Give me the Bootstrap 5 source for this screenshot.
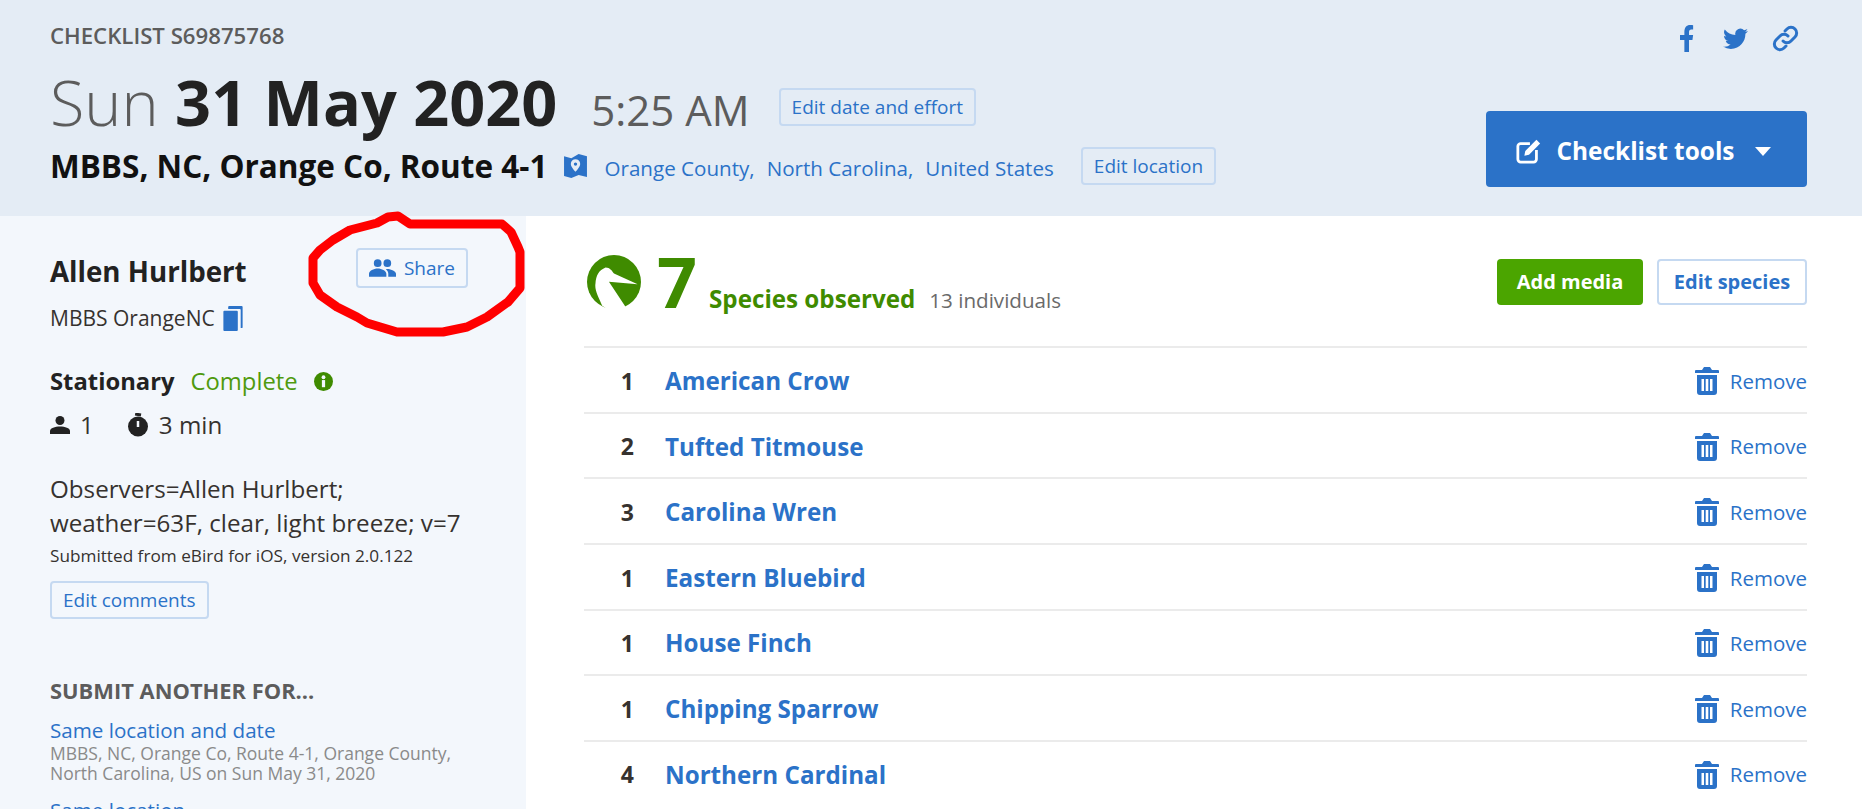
<!DOCTYPE html>
<html lang="en">
<head>
  <meta charset="UTF-8" />
  <title>Checklist S69875768</title>
  <link href="https://cdn.jsdelivr.net/npm/bootstrap@5.3.2/dist/css/bootstrap.min.css" rel="stylesheet" />
  <style>
    html, body {
      height: 100%;
      overflow: hidden;
    }
    body {
      background-color: #fff;
      color: #36322f;
      font-family: "Open Sans", "Noto Sans", sans-serif;
      position: relative;
    }
    a {
      color: #2b72c8;
      text-decoration: none;
    }
    .top-band {
      background-color: #e4ecf5;
      height: 216px;
      padding: 0 55px 0 50px;
    }
    .check-id {
      color: #5c5c5c;
      font-size: 22.2px;
      font-weight: 600;
      padding-top: 22px;
      line-height: 28px;
    }
    .date-line {
      margin-top: 14px;
      line-height: 76px;
    }
    .date-day {
      color: #5c5c5c;
      font-size: 63px;
      font-weight: 300;
    }
    .date-full {
      color: #222;
      font-size: 63px;
      font-weight: 700;
    }
    .date-time {
      color: #5c5c5c;
      font-size: 42px;
      font-weight: 400;
      margin-left: 34px;
    }
    .date-edit {
      align-self: center;
      margin-left: 29px;
      margin-top: 2px;
    }
    .loc-line {
      margin-top: -6px;
    }
    .loc-name {
      color: #111;
      font-size: 31.5px;
      font-weight: 700;
    }
    .loc-link {
      font-size: 20.6px;
      margin-right: 12px;
      padding-top: 6px;
    }
    .loc-edit {
      margin-left: 15px;
    }
    .btn-edit {
      background: transparent;
      border: 2px solid #c5d9f1;
      border-radius: 4px;
      color: #2b72c8;
      font-size: 19px;
      line-height: 24px;
      padding: 5px 11px;
    }
    .btn-share {
      margin-top: 2px;
      padding: 6px 11px;
    }
    .social-row {
      margin-top: 25px;
      padding-right: 8px;
    }
    .social-fb {
      margin-right: 29px;
    }
    .social-tw {
      margin-right: 24px;
    }
    .btn-tools {
      background-color: #2b72c8;
      border: 0;
      border-radius: 4px;
      color: #fff;
      font-size: 24.4px;
      font-weight: 700;
      height: 76px;
      width: 321px;
      margin-bottom: 29px;
      padding: 4px 6px 0 0;
    }
    .tools-label {
      margin-left: 15px;
      margin-right: 21px;
    }
    .tools-caret {
      border-left: 8px solid transparent;
      border-right: 8px solid transparent;
      border-top: 9px solid #fff;
    }
    .body-row {
      height: 593px;
      overflow: hidden;
    }
    .side-col {
      background-color: #f3f7fc;
      width: 526px;
      flex: none;
      padding: 30px 58px 0 50px;
    }
    .observer {
      color: #222;
      font-size: 27.7px;
      font-weight: 700;
      line-height: 38px;
      margin-top: 6px;
    }
    .side-user {
      font-size: 21px;
      line-height: 28px;
      margin-top: 14px;
    }
    .side-text {
      font-size: 24.2px;
      line-height: 34px;
    }
    .side-protocol {
      color: #222;
      font-size: 23.8px;
      margin-top: 32px;
    }
    .side-effort {
      margin-top: 10px;
    }
    .effort-val {
      margin-left: 10px;
    }
    .effort-time {
      margin-left: 33px;
    }
    .side-comments {
      margin-top: 30px;
    }
    .side-tiny {
      font-size: 17.2px;
      line-height: 24px;
      margin-top: 4px;
    }
    .comments-edit {
      margin-top: 13px;
    }
    .side-head {
      color: #5c5c5c;
      font-size: 21.9px;
      font-weight: 700;
      line-height: 30px;
      margin-top: 57px;
    }
    .submit-link {
      font-size: 20.6px;
      line-height: 24px;
      margin-top: 12px;
    }
    .submit-note {
      color: #8a8a8a;
      font-size: 17.5px;
      line-height: 20px;
      margin-top: 1px;
      margin-bottom: 15px;
    }
    .complete-text {
      color: #4f9a0e;
    }
    .main-col {
      padding: 39px 55px 0 58px;
      min-width: 0;
    }
    .bird-logo {
      margin-left: 3px;
    }
    .total-num {
      color: #3f8b00;
      font-size: 70px;
      font-weight: 700;
      line-height: 52px;
      margin-left: 16px;
    }
    .total-label {
      color: #3f8b00;
      font-size: 24.2px;
      font-weight: 700;
      margin-left: 12px;
    }
    .total-count {
      color: #6a6a6a;
      font-size: 20.6px;
      margin-left: 14px;
    }
    .head-btns {
      gap: 14px;
      margin-top: 4px;
    }
    .btn-media {
      background-color: #4ba500;
      border: 0;
      border-radius: 4px;
      color: #fff;
      font-size: 20px;
      font-weight: 700;
      height: 46px;
      width: 146px;
    }
    .btn-species {
      background-color: #fff;
      border: 2px solid #c5d9f1;
      border-radius: 4px;
      color: #2b72c8;
      font-size: 20px;
      font-weight: 700;
      height: 46px;
      width: 150px;
    }
    .sp-list {
      margin-top: 29px;
    }
    .sp-row {
      border-top: 2px solid #ebebeb;
      height: 65.6px;
      padding-top: 2px;
    }
    .sp-count {
      color: #36322f;
      font-size: 23px;
      font-weight: 700;
      width: 50px;
      text-align: right;
    }
    .sp-name {
      color: #2b72c8;
      font-size: 24.2px;
      font-weight: 700;
      margin-left: 31px;
    }
    .sp-remove {
      color: #2b72c8;
      font-size: 20.5px;
      margin-left: 11px;
    }
    .ink-circle {
      position: absolute;
      left: 0;
      top: 0;
      pointer-events: none;
    }
  </style>
</head>
<body>
  <svg width="0" height="0" class="d-block">
    <symbol id="ic-trash" viewBox="0 0 24 28"><path fill="#2b72c8" d="M9 0h6l2 3h6a1 1 0 0 1 1 1v2H0V4a1 1 0 0 1 1-1h6zM2 8h20v17a3 3 0 0 1-3 3H5a3 3 0 0 1-3-3zm4.500 4v12h2.500V12zm4.200 0v12h2.600V12zm4.300 0v12h2.500V12z"/></symbol>
  </svg>

  <!-- Header -->
  <div class="top-band d-flex justify-content-between">
    <div>
      <div class="check-id">CHECKLIST S69875768</div>
      <div class="date-line d-flex align-items-baseline">
        <span class="date-day">Sun&nbsp;</span><span class="date-full">31 May 2020</span>
        <span class="date-time">5:25 AM</span>
        <button class="btn-edit date-edit">Edit date and effort</button>
      </div>
      <div class="loc-line d-flex align-items-center">
        <span class="loc-name">MBBS, NC, Orange Co, Route 4-1</span>
        <svg class="ms-3 me-3" width="25" height="25" viewBox="0 0 22 24"><path fill="#2b72c8" fill-rule="evenodd" d="M0 3l7 2 7-4 8 2v20l-8-2-7 3-7-2zM11 6a4.500 4.500 0 0 0-4.500 4.500c0 3 4.500 7.500 4.500 7.500s4.500-4.500 4.500-7.500A4.500 4.500 0 0 0 11 6zm0 3a1.600 1.600 0 1 1 0 3.200 1.600 1.600 0 0 1 0-3.200z"/></svg>
        <a class="loc-link" href="#">Orange County,</a>
        <a class="loc-link" href="#">North Carolina,</a>
        <a class="loc-link" href="#">United States</a>
        <button class="btn-edit loc-edit">Edit location</button>
      </div>
    </div>
    <div class="d-flex flex-column align-items-end">
      <div class="social-row d-flex align-items-center">
        <svg class="social-fb" width="14" height="27" viewBox="0 0 16 27" preserveAspectRatio="none"><path fill="#2b72c8" d="M5 27V15H0v-5h5V7c0-4.500 2.500-7 6.500-7 1.800 0 3.500.2 3.500.2v4.300h-2c-2 0-2.700 1.200-2.700 2.600V10h4.700l-.8 5h-3.900v12z"/></svg>
        <svg class="social-tw" width="25" height="22" viewBox="0 0 24 20"><path fill="#2b72c8" d="M24 2.400c-.9.400-1.800.7-2.800.8 1-.6 1.800-1.600 2.200-2.700-1 .6-2 1-3.100 1.200A4.900 4.900 0 0 0 11.900 6.200 14 14 0 0 1 1.700.9a4.900 4.900 0 0 0 1.500 6.600c-.8 0-1.600-.2-2.200-.6v.1c0 2.400 1.700 4.400 3.900 4.800-.7.200-1.500.2-2.200.1.600 2 2.400 3.400 4.600 3.400A9.900 9.900 0 0 1 0 17.300 14 14 0 0 0 7.500 19.500c9.100 0 14-7.500 14-14v-.6c1-.7 1.800-1.600 2.500-2.500z"/></svg>
        <svg width="27" height="27" viewBox="0 0 27 27" fill="none" stroke="#2b72c8" stroke-width="3" stroke-linecap="round"><path d="M11 16a5.500 5.500 0 0 0 8 0l4-4a5.600 5.600 0 0 0-8-8l-2 2"/><path d="M16 11a5.500 5.500 0 0 0-8 0l-4 4a5.600 5.600 0 0 0 8 8l2-2"/></svg>
      </div>
      <button class="btn-tools d-flex align-items-center justify-content-center mt-auto">
        <svg width="26" height="26" viewBox="0 0 28 28" fill="none" stroke="#fff" stroke-width="3"><path d="M15 6H5a3 3 0 0 0-3 3v14a3 3 0 0 0 3 3h14a3 3 0 0 0 3-3V13"/><path fill="#fff" stroke="none" d="M22 2l4 4-12 12-5 1 1-5z"/></svg>
        <span class="tools-label">Checklist tools</span>
        <span class="tools-caret"></span>
      </button>
    </div>
  </div>

  <div class="body-row d-flex">
    <!-- Sidebar -->
    <div class="side-col">
      <div class="d-flex justify-content-between align-items-start">
        <div>
          <div class="observer">Allen Hurlbert</div>
          <div class="side-user d-flex align-items-center">
            <span>MBBS OrangeNC</span>
            <svg class="ms-2" width="20" height="25" viewBox="0 0 20 26"><path fill="#2b72c8" d="M5 1a1 1 0 0 1 1-1h13a1 1 0 0 1 1 1v21a1 1 0 0 1-1 1h-1V4a1 1 0 0 0-1-1H5zM0 6a1 1 0 0 1 1-1h13a1 1 0 0 1 1 1v19a1 1 0 0 1-1 1H1a1 1 0 0 1-1-1z"/></svg>
          </div>
        </div>
        <button class="btn-edit btn-share d-flex align-items-center">
          <svg class="me-2" width="27" height="18" viewBox="0 0 28 18"><path fill="#2b72c8" d="M9 8a4 4 0 1 0 0-8 4 4 0 0 0 0 8zm10 0a4 4 0 1 0 0-8 4 4 0 0 0 0 8zM0 18v-3c0-3 5-5.500 9-5.500s9 2.500 9 5.500v3zm20 0v-3c0-2-1-3.500-2.500-4.800.6-.2 1.100-.2 1.500-.2 4 0 9 2.500 9 5v3z"/></svg>
          Share
        </button>
      </div>

      <div class="side-text side-protocol d-flex align-items-center">
        <strong>Stationary</strong>
        <span class="complete-text ms-3">Complete</span>
        <svg class="ms-3" width="19" height="19" viewBox="0 0 20 20"><circle cx="10" cy="10" r="10" fill="#3f8b00"/><rect x="8.300" y="8.500" width="3.400" height="7.500" fill="#f3f7fc"/><circle cx="10" cy="5.500" r="2" fill="#f3f7fc"/></svg>
      </div>
      <div class="side-text side-effort d-flex align-items-center">
        <svg width="20" height="18" viewBox="0 0 20 18"><circle cx="10" cy="4.500" r="4.500" fill="#222"/><path fill="#222" d="M0 18v-3c0-3 5-4.500 10-4.500S20 12 20 15v3z"/></svg>
        <span class="effort-val">1</span>
        <svg class="effort-time" width="22" height="24" viewBox="0 0 22 24"><rect x="8" y="0" width="6" height="3" fill="#222" transform="rotate(10 11 2)"/><circle cx="11" cy="13.500" r="10" fill="#222"/><path d="M11 8v6" stroke="#f3f7fc" stroke-width="2.500"/></svg>
        <span class="effort-val">3 min</span>
      </div>

      <div class="side-text side-comments">Observers=Allen Hurlbert;<br>weather=63F, clear, light breeze; v=7</div>
      <div class="side-tiny">Submitted from eBird for iOS, version 2.0.122</div>
      <button class="btn-edit comments-edit">Edit comments</button>

      <div class="side-head">SUBMIT ANOTHER FOR...</div>
      <a class="submit-link d-block" href="#">Same location and date</a>
      <div class="submit-note">MBBS, NC, Orange Co, Route 4-1, Orange County,<br>North Carolina, US on Sun May 31, 2020</div>
      <a class="submit-link d-block" href="#">Same location</a>
    </div>

    <!-- Species list -->
    <div class="main-col flex-grow-1">
      <div class="d-flex justify-content-between align-items-start">
        <div class="d-flex align-items-start">
          <svg class="bird-logo" width="54" height="54" viewBox="0 0 160 160"><circle cx="80" cy="80" r="80" fill="#3f8b00"/><path fill="#fff" d="M45 150C35 125 22 105 25 85 27 60 35 45 55 37 68 37 75 48 80 55L150 87 65 79 115 155 80 175z"/></svg>
          <div class="d-flex align-items-baseline">
            <span class="total-num">7</span>
            <span class="total-label">Species observed</span>
            <span class="total-count">13 individuals</span>
          </div>
        </div>
        <div class="head-btns d-flex">
          <button class="btn-media">Add media</button>
          <button class="btn-species">Edit species</button>
        </div>
      </div>
      <div id="speciesList" class="sp-list"></div>
    </div>
  </div>

  <!-- hand-drawn circle from the screenshot -->
  <svg class="ink-circle" width="1862" height="809" fill="none" stroke="#f00" stroke-width="9" stroke-linejoin="round">
    <path d="M398 216L410 224H502L511 232 518 247 520 252V288L508 302 487 317 467 327 443 332H397L367 323 357 317 337 307 320 295 313 283V258L320 250 333 240 350 230 377 223 388 217z"/>
  </svg>

  <script>
    const species = [
      [1, "American Crow"], [2, "Tufted Titmouse"], [3, "Carolina Wren"], [1, "Eastern Bluebird"],
      [1, "House Finch"], [1, "Chipping Sparrow"], [4, "Northern Cardinal"]
    ];
    const list = document.getElementById("speciesList");
    species.forEach(s => {
      list.innerHTML += `
        <div class="sp-row d-flex align-items-center">
          <span class="sp-count">${s[0]}</span>
          <a class="sp-name flex-grow-1" href="#">${s[1]}</a>
          <svg width="24" height="28"><use href="#ic-trash"/></svg>
          <a class="sp-remove" href="#">Remove</a>
        </div>`;
    });
  </script>
</body>
</html>
